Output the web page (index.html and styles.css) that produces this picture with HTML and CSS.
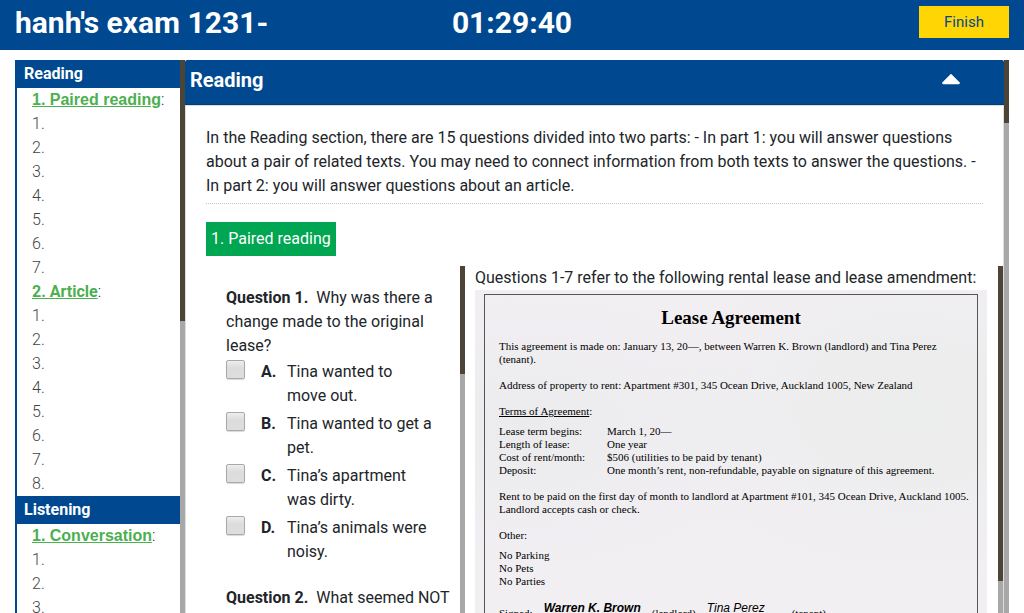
FILE: index.html
```html
<!DOCTYPE html>
<html lang="en">
<head>
<meta charset="utf-8">
<title>hanh's exam 1231-</title>
<link rel="stylesheet" href="styles.css">
</head>
<body>
<header class="topbar">
  <h1 class="exam-title">hanh's exam 1231-</h1>
  <div class="timer">01:29:40</div>
  <div class="topbar-actions"><button class="finish" type="button">Finish</button></div>
</header>
<div class="workspace">
  <nav class="sidebar">
    <div class="outline">
      <h2 class="outline-section">Reading</h2>
      <p class="outline-part"><a class="part-link" href="#paired">1. Paired reading</a>:</p>
      <ol class="outline-list"><li>1.</li><li>2.</li><li>3.</li><li>4.</li><li>5.</li><li>6.</li><li>7.</li></ol>
      <p class="outline-part"><a class="part-link part-link-alt" href="#article">2. Article</a>:</p>
      <ol class="outline-list"><li>1.</li><li>2.</li><li>3.</li><li>4.</li><li>5.</li><li>6.</li><li>7.</li><li>8.</li></ol>
      <h2 class="outline-section">Listening</h2>
      <p class="outline-part"><a class="part-link" href="#conversation">1. Conversation</a>:</p>
      <ol class="outline-list"><li>1.</li><li>2.</li><li>3.</li></ol>
    </div>
    <div class="track"><div class="thumb thumb-outline"></div></div>
  </nav>
  <main class="content">
    <section class="panel">
      <header class="panel-head">
        <h2 class="panel-title">Reading</h2>
        <button class="collapse" type="button" aria-label="Collapse section">
          <svg width="20" height="12" viewBox="0 0 20 12"><path d="M10 1 L18.500 9.500 Q19 11 17.500 11 H2.500 Q1 11 1.500 9.500Z" fill="#fff" stroke="#fff" stroke-width="0.500" stroke-linejoin="round"/></svg>
        </button>
      </header>
      <div class="panel-body">
        <p class="intro">In the Reading section, there are 15 questions divided into two parts: - In part 1: you will answer questions about a pair of related texts. You may need to connect information from both texts to answer the questions. - In part 2: you will answer questions about an article.</p>
        <h3 class="part-badge" id="paired">1. Paired reading</h3>
        <div class="split">
          <div class="questions">
            <div class="question-list">
              <fieldset class="question">
                <legend class="prompt"><b>Question 1.</b>&nbsp; Why was there a change made to the original lease?</legend>
                <label class="answer"><input class="tick" type="checkbox"><b class="letter">A.</b><span>Tina wanted to move out.</span></label>
                <label class="answer"><input class="tick" type="checkbox"><b class="letter">B.</b><span>Tina wanted to get a pet.</span></label>
                <label class="answer"><input class="tick" type="checkbox"><b class="letter">C.</b><span>Tina’s apartment was dirty.</span></label>
                <label class="answer"><input class="tick" type="checkbox"><b class="letter">D.</b><span>Tina’s animals were noisy.</span></label>
              </fieldset>
              <fieldset class="question">
                <legend class="prompt"><b>Question 2.</b>&nbsp; What seemed NOT</legend>
              </fieldset>
            </div>
            <div class="track"><div class="thumb thumb-questions"></div></div>
          </div>
          <div class="passage">
            <div class="passage-text">
              <p class="passage-intro">Questions 1-7 refer to the following rental lease and lease amendment:</p>
              <div class="scan">
                <article class="lease">
                  <h4 class="lease-title">Lease Agreement</h4>
                  <p class="lease-par">This agreement is made on: January 13, 20—, between Warren K. Brown (landlord) and Tina Perez<br>(tenant).</p>
                  <p class="lease-par">Address of property to rent: Apartment #301, 345 Ocean Drive, Auckland 1005, New Zealand</p>
                  <p class="lease-par lease-terms"><u>Terms of Agreement</u>:</p>
                  <dl class="terms">
                    <dt>Lease term begins:</dt><dd>March 1, 20—</dd>
                    <dt>Length of lease:</dt><dd>One year</dd>
                    <dt>Cost of rent/month:</dt><dd>$506 (utilities to be paid by tenant)</dd>
                    <dt>Deposit:</dt><dd>One month’s rent, non-refundable, payable on signature of this agreement.</dd>
                  </dl>
                  <p class="lease-par">Rent to be paid on the first day of month to landlord at Apartment #101, 345 Ocean Drive, Auckland 1005.<br>Landlord accepts cash or check.</p>
                  <p class="lease-par lease-terms">Other:</p>
                  <p class="lease-par">No Parking<br>No Pets<br>No Parties</p>
                  <p class="signatures"><span class="role">Signed:</span><i class="hand hand-bold">Warren K. Brown</i><span class="role">(landlord)</span><i class="hand">Tina Perez</i><span class="role tenant">(tenant)</span></p>
                </article>
              </div>
            </div>
            <div class="track"><div class="thumb thumb-passage"></div></div>
          </div>
        </div>
      </div>
    </section>
    <div class="track"><div class="thumb thumb-content"></div></div>
  </main>
</div>
</body>
</html>
```
FILE: styles.css
```css
* { box-sizing: border-box; }
html, body { height: 100%; }
body {
  margin: 0;
  display: flex;
  flex-direction: column;
  overflow: hidden;
  background: #fff;
  color: #212529;
  font: 16px/24px Roboto, "Liberation Sans", sans-serif;
}
h1, h2, h3, h4, p, ol, dl, dd { margin: 0; padding: 0; }
b { font-weight: 700; }

.topbar {
  flex: none;
  display: grid;
  grid-template-columns: 1fr auto 1fr;
  align-items: start;
  height: 50px;
  padding: 6px 15px;
  background: #004990;
  color: #fff;
}
.exam-title, .timer { font-size: 30px; line-height: 34px; font-weight: 700; }
.topbar-actions { text-align: right; }
.finish {
  width: 90px;
  height: 32px;
  padding: 0;
  border: 0;
  background: #ffd503;
  color: #004990;
  font: 15px/32px Roboto, "Liberation Sans", sans-serif;
  vertical-align: top;
}

.workspace { flex: 1; min-height: 0; display: flex; padding: 10px 15px 0; }
.track { flex: none; width: 5px; background: #a8a8a8; }
.thumb { background: #4b4437; }
.thumb-outline { height: 261px; }
.thumb-content { height: 63px; }
.thumb-questions { height: 108px; }
.thumb-passage { height: 315px; }

.sidebar { flex: none; display: flex; width: 170px; }
.outline { flex: 1; overflow: hidden; border-left: 2px solid #004990; font-weight: 300; }
.outline-section {
  padding: 2px 7px;
  background: #004990;
  color: #fff;
  font-size: 16px;
  font-weight: 700;
}
.outline-part, .outline-list { padding-left: 15px; list-style: none; }
.outline-list { color: #444; }
.part-link { color: #4caf50; font-weight: 700; font-family: "Liberation Sans", sans-serif; }
.part-link-alt { font-family: Roboto, sans-serif; }

.content { flex: 1; min-width: 0; display: flex; }
.panel {
  flex: 1;
  min-width: 0;
  display: flex;
  flex-direction: column;
  overflow: hidden;
  border-radius: 2px 2px 0 0;
}
.panel-head {
  flex: none;
  display: flex;
  justify-content: space-between;
  height: 45px;
  padding: 0 43px 0 5px;
  background: #004990;
  border-bottom: 1px solid #003c78;
  color: #fff;
}
.panel-title { font-size: 20px; line-height: 40px; font-weight: 700; }
.collapse { height: 38px; padding: 0; border: 0; background: none; }
.collapse svg { display: block; }
.panel-body {
  flex: 1;
  min-height: 0;
  display: flex;
  flex-direction: column;
  padding: 20px 0 0 20px;
  border: 1px solid #dcdcdc;
  border-bottom: 0;
}
.intro { margin-right: 20px; padding-bottom: 5px; border-bottom: 1px dotted #c4c4c4; }
.part-badge {
  align-self: flex-start;
  margin: 18px 0 10px;
  padding: 5px;
  background: #00a651;
  color: #fff;
  font-size: 16px;
  font-weight: 400;
}
.split { flex: 1; min-height: 0; display: flex; gap: 10px; }
.questions { flex: none; display: flex; width: 259px; }
.question-list { flex: 1; min-width: 0; overflow: hidden; padding: 20px 9px 0 20px; }
.question { margin: 0 0 20px; padding: 0; border: 0; min-width: 0; }
.prompt { padding: 0; }
.answer { display: flex; padding: 2px 16px 2px 0; }
.tick {
  appearance: none;
  flex: none;
  width: 19px;
  height: 19px;
  margin: 0 16px 0 0;
  border: 1px solid #a9a9a9;
  border-radius: 2px;
  background: linear-gradient(#ededed, #dcdcdc 40%, #dedede);
  box-shadow: 0 1px 1px rgba(0, 0, 0, .15);
}
.letter { flex: none; width: 26px; }

.passage { flex: 1; min-width: 0; display: flex; }
.passage-text { flex: 1; min-width: 0; overflow: hidden; }
.passage-intro { white-space: nowrap; }
.scan {
  margin-right: 11px;
  padding: 4px 9px 0;
  background:
    radial-gradient(ellipse at 85% 30%, rgba(225, 232, 225, .4), transparent 45%),
    radial-gradient(ellipse at 10% 35%, rgba(225, 230, 230, .4), transparent 40%),
    #f2eff3;
}
.lease {
  height: 400px;
  padding: 10px 14px 0;
  border: 1px solid #555;
  color: #000;
  font: 11px/13px "Liberation Serif", serif;
  white-space: nowrap;
}
.lease-title {
  margin-bottom: 9px;
  color: #000;
  font-size: 19px;
  line-height: 26px;
  text-align: center;
}
.lease-par { margin-bottom: 13px; }
.lease-par.lease-terms { margin-bottom: 7px; }
.terms { display: grid; grid-template-columns: 108px 1fr; margin-bottom: 13px; }
.signatures { display: flex; align-items: flex-start; gap: 11px; }
.role { padding-top: 6px; }
.hand { font: italic 12px/14px "Liberation Sans", sans-serif; }
.hand-bold { font-weight: 700; }
.tenant { margin-left: 16px; }
```
